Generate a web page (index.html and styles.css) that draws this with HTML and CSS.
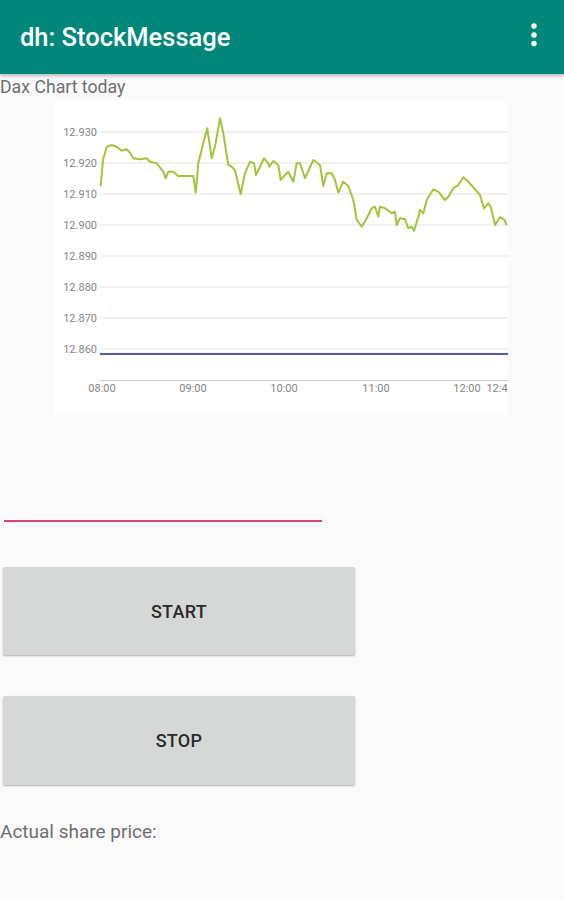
FILE: index.html
```html
<!DOCTYPE html>
<html lang="en">
<head>
    <meta charset="UTF-8">
    <meta name="viewport" content="width=device-width, initial-scale=1.0">
    <title>dh: StockMessage</title>
    <link rel="stylesheet" href="styles.css">
</head>
<body>
    <header class="app-bar">
        <h1 class="app-title">dh: StockMessage</h1>
        <!-- overflow menu -->
        <svg class="overflow" width="12" height="30" viewBox="0 0 12 30">
            <circle cx="6" cy="6" r="2.7" fill="#fff"/>
            <circle cx="6" cy="15" r="2.7" fill="#fff"/>
            <circle cx="6" cy="23.5" r="2.7" fill="#fff"/>
        </svg>
    </header>

    <main class="content">
        <p class="label">Dax Chart today</p>

        <!-- chart, viewBox uses page coordinates -->
        <div class="chart">
            <svg width="453" height="315" viewBox="55 100 453 315">
                <g class="grid">
                    <line x1="100" y1="132" x2="508" y2="132"/>
                    <line x1="100" y1="163" x2="508" y2="163"/>
                    <line x1="100" y1="194" x2="508" y2="194"/>
                    <line x1="100" y1="225" x2="508" y2="225"/>
                    <line x1="100" y1="256" x2="508" y2="256"/>
                    <line x1="100" y1="287" x2="508" y2="287"/>
                    <line x1="100" y1="318" x2="508" y2="318"/>
                    <line x1="100" y1="349" x2="508" y2="349"/>
                </g>
                <g class="y-labels">
                    <text x="97" y="136">12.930</text>
                    <text x="97" y="167">12.920</text>
                    <text x="97" y="198">12.910</text>
                    <text x="97" y="229">12.900</text>
                    <text x="97" y="260">12.890</text>
                    <text x="97" y="291">12.880</text>
                    <text x="97" y="322">12.870</text>
                    <text x="97" y="353">12.860</text>
                </g>
                <line class="axis" x1="100" y1="380.5" x2="508" y2="380.5"/>
                <line class="base" x1="100" y1="354" x2="508" y2="354"/>
                <polyline class="price-line" points="100.7,186 103,160 106.7,146.7 111.7,145 116.7,146.7 121.7,150.7 126.7,149.3 130,152.7 133.3,158.3 140,159.3 146.7,158.3 150,161.7 156.7,163.3 163.3,171.7 165.7,178.3 168.3,171.7 173.3,171.7 178.3,176 193.3,176 195.7,192.7 198.3,163.3 203.3,143.3 207.3,128.3 211.7,158.3 215,146.7 220,118.3 223.3,133.3 228.3,165 231.7,166.7 235,170 240.7,194.3 245,173.3 250,161.7 254,163.3 256,175 260,166.7 264,158.3 268.3,163.3 269.3,166.7 273.3,161 278.3,165 280.7,180 283.3,176.7 288.3,171.7 293.3,181.7 296.7,163.3 300,163.3 305,178.3 313.3,160 320,165 323.3,186 326.7,173.3 331.7,173.3 335,180 338.3,192.7 343.3,181.7 348.3,186 353.3,200 356.7,220 361.7,226.7 366.7,218.3 371.7,208.3 375,206.7 378.3,216.7 380,206.7 385,208.3 391.7,213.3 395,211.7 396.7,225 400,218.3 405,219.3 408.3,228.3 411.7,226.7 414,230.7 418.3,216.7 420,210 423.3,213.3 426.7,200 433.3,189.3 438.3,191.7 445,200 448.3,196.7 453.3,188.3 458.3,185 463.3,177.3 468.3,181.7 480,195 484,208.3 488.3,203.3 490.7,206.7 495,225 500,217.3 504,219.3 506.7,225"/>
                <g class="x-labels">
                    <text x="102" y="392">08:00</text>
                    <text x="193" y="392">09:00</text>
                    <text x="284" y="392">10:00</text>
                    <text x="376" y="392">11:00</text>
                    <text x="467" y="392">12:00</text>
                    <text x="497" y="392">12:4</text>
                </g>
            </svg>
        </div>

        <input class="price-field" type="text">

        <button class="action start">START</button>
        <button class="action stop">STOP</button>

        <p class="label share">Actual share price:</p>
    </main>
</body>
</html>
```

FILE: styles.css
```css
body {
    margin: 0;
    background-color: #fafafa;
    font-family: Roboto, "Noto Sans", sans-serif;
}

/* top bar */
.app-bar {
    display: flex;
    align-items: center;
    justify-content: space-between;
    height: 74px;
    padding: 0 24px 0 20px;
    background-color: #00877a;
    box-shadow: 0 2px 3px rgba(0,0,0,0.25);
}
.app-title {
    margin: 0;
    color: #fff;
    font-size: 25.5px;
    font-weight: 500;
}
.overflow {
    margin-top: -4px;
}

.label {
    margin: 0;
    height: 26px;
    line-height: 26px;
    font-size: 17.7px;
    color: #6f6f6f;
}

/* chart */
.chart {
    margin-left: 55px;
    width: 453px;
    height: 315px;
    background-color: #fff;
}
.chart svg {
    display: block;
}
.grid line {
    stroke: #ececec;
    stroke-width: 1.5;
}
.axis {
    stroke: #c8c8e2;
    stroke-width: 1;
}
.base {
    stroke: #5a58a8;
    stroke-width: 2;
}
.price-line {
    fill: none;
    stroke: #a2c43c;
    stroke-width: 2;
    stroke-linejoin: round;
}
.y-labels text {
    font-size: 11px;
    fill: #858585;
    text-anchor: end;
}
.x-labels text {
    font-size: 11px;
    fill: #858585;
    text-anchor: middle;
}

/* edit text */
.price-field {
    display: block;
    box-sizing: border-box;
    margin: 65px 0 0 4px;
    width: 318px;
    height: 42px;
    border: none;
    border-bottom: 2px solid #d6457a;
    background: transparent;
    outline: none;
}

/* buttons */
.action {
    display: block;
    margin-left: 3px;
    width: 352px;
    border: none;
    border-radius: 2px;
    background-color: #d6d7d7;
    box-shadow: 0 1px 2px rgba(0,0,0,0.3);
    font-family: Roboto, sans-serif;
    font-size: 18px;
    font-weight: 500;
    letter-spacing: 0.3px;
    color: #2a2a2a;
}
.start {
    margin-top: 45px;
    height: 88px;
}
.stop {
    margin-top: 41px;
    height: 89px;
}

.share {
    margin-top: 34px;
    font-size: 19px;
}
```
